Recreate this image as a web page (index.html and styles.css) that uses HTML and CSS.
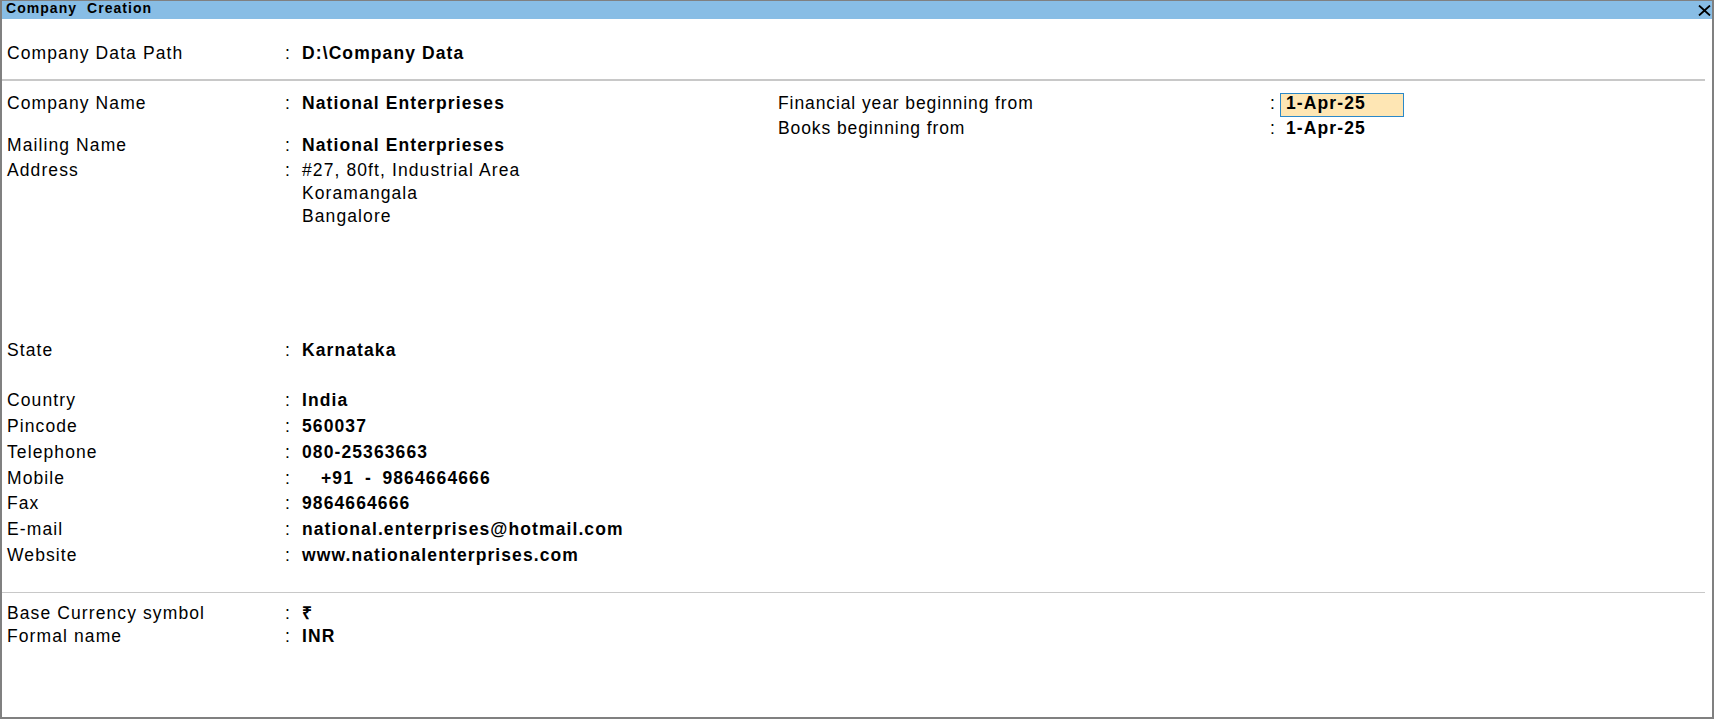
FILE: index.html
```html
<!DOCTYPE html>
<html lang="en">

<head>
    <meta charset="UTF-8">
    <title>Company Creation</title>
    <link rel="stylesheet" href="styles.css">
</head>

<body>
    <div class="window">
        <div class="titlebar">
            <span class="title">Company&nbsp; Creation</span>
            <svg class="close" width="13" height="11" viewBox="0 0 13 11">
                <path d="M1 0.5 L12 10.5 M12 0.5 L1 10.5" stroke="#000" stroke-width="1.8" fill="none"/>
            </svg>
        </div>

        <!-- data path -->
        <div class="section path">
            <div class="field">
                <span class="label">Company Data Path</span>
                <span class="colon">:</span>
                <span class="value b">D:\Company Data</span>
            </div>
        </div>

        <!-- company details -->
        <div class="section main">
            <div class="col left">
                <div class="field spaced">
                    <span class="label">Company Name</span>
                    <span class="colon">:</span>
                    <span class="value b">National Enterprieses</span>
                </div>
                <div class="field">
                    <span class="label">Mailing Name</span>
                    <span class="colon">:</span>
                    <span class="value b">National Enterprieses</span>
                </div>
                <div class="field address">
                    <span class="label">Address</span>
                    <span class="colon">:</span>
                    <div class="value">
                        <div>#27, 80ft, Industrial Area</div>
                        <div>Koramangala</div>
                        <div>Bangalore</div>
                    </div>
                </div>
                <div class="field state">
                    <span class="label">State</span>
                    <span class="colon">:</span>
                    <span class="value b">Karnataka</span>
                </div>
                <div class="contact">
                    <div class="field">
                        <span class="label">Country</span>
                        <span class="colon">:</span>
                        <span class="value b">India</span>
                    </div>
                    <div class="field">
                        <span class="label">Pincode</span>
                        <span class="colon">:</span>
                        <span class="value b">560037</span>
                    </div>
                    <div class="field">
                        <span class="label">Telephone</span>
                        <span class="colon">:</span>
                        <span class="value b">080-25363663</span>
                    </div>
                    <div class="field">
                        <span class="label">Mobile</span>
                        <span class="colon">:</span>
                        <span class="value b"><span class="cc">+91</span><span class="dash">-</span><span>9864664666</span></span>
                    </div>
                    <div class="field">
                        <span class="label">Fax</span>
                        <span class="colon">:</span>
                        <span class="value b">9864664666</span>
                    </div>
                    <div class="field">
                        <span class="label">E-mail</span>
                        <span class="colon">:</span>
                        <span class="value b">national.enterprises@hotmail.com</span>
                    </div>
                    <div class="field">
                        <span class="label">Website</span>
                        <span class="colon">:</span>
                        <span class="value b">www.nationalenterprises.com</span>
                    </div>
                </div>
            </div>

            <div class="col right">
                <div class="field">
                    <span class="label">Financial year beginning from</span>
                    <span class="colon">:</span>
                    <span class="value b"><span class="input">1-Apr-25</span></span>
                </div>
                <div class="field">
                    <span class="label">Books beginning from</span>
                    <span class="colon">:</span>
                    <span class="value b plain">1-Apr-25</span>
                </div>
            </div>
        </div>

        <!-- currency -->
        <div class="section currency">
            <div class="field">
                <span class="label">Base Currency symbol</span>
                <span class="colon">:</span>
                <span class="value b">₹</span>
            </div>
            <div class="field">
                <span class="label">Formal name</span>
                <span class="colon">:</span>
                <span class="value b">INR</span>
            </div>
        </div>
    </div>
</body>

</html>
```

FILE: styles.css
```css
* {
    padding: 0;
    margin: 0;
    box-sizing: border-box;
}

body {
    font-family: "Liberation Sans", Arial, sans-serif;
    font-size: 17.5px;
    letter-spacing: 1.1px;
    color: #000;
    background: #fff;
}

.window {
    width: 100vw;
    height: 100vh;
    border: 2px solid #808080;
    border-top-width: 1px;
    display: flex;
    flex-direction: column;
}

.titlebar {
    height: 18px;
    background: #88bde5;
    display: flex;
    justify-content: space-between;
    align-items: flex-start;
    padding-left: 4px;
}

.title {
    font-size: 14px;
    font-weight: bold;
    letter-spacing: 1.05px;
    line-height: 15px;
}

.close {
    margin-top: 4px;
    margin-right: 1px;
}

.section {
    padding-left: 5px;
    margin-right: 7px;
}

.field {
    display: grid;
    grid-template-columns: 278px 17px auto;
    line-height: 25px;
}

.b {
    font-weight: bold;
}

.path {
    padding-top: 22px;
    padding-bottom: 13px;
    border-bottom: 2px solid #c8c8c8;
}

.main {
    display: flex;
    padding-top: 9.5px;
    padding-bottom: 23.5px;
    border-bottom: 1px solid #c8c8c8;
}

.left {
    width: 771px;
}

.spaced {
    margin-bottom: 17px;
}

.address {
    line-height: 23px;
    margin-top: 1px;
    margin-bottom: 110.7px;
}

.state {
    margin-bottom: 25px;
}

.contact .field {
    line-height: 25.8px;
}

.cc {
    margin-left: 19px;
}

.dash {
    margin: 0 10.5px 0 11px;
}

.right {
    flex: 1;
    padding-top: 1.7px;
}

.right .field {
    grid-template-columns: 492px 10px auto;
    line-height: 23.5px;
}

.right .label {
    letter-spacing: 0.9px;
}

.input {
    display: inline-block;
    width: 124px;
    line-height: 19.3px;
    padding-left: 5px;
    padding-bottom: 3px;
    border: 1px solid #2b88c8;
    background: #fee6b4;
}

.plain {
    padding-left: 6px;
}

.currency {
    padding-top: 9px;
}

.currency .field {
    line-height: 23px;
}
```
